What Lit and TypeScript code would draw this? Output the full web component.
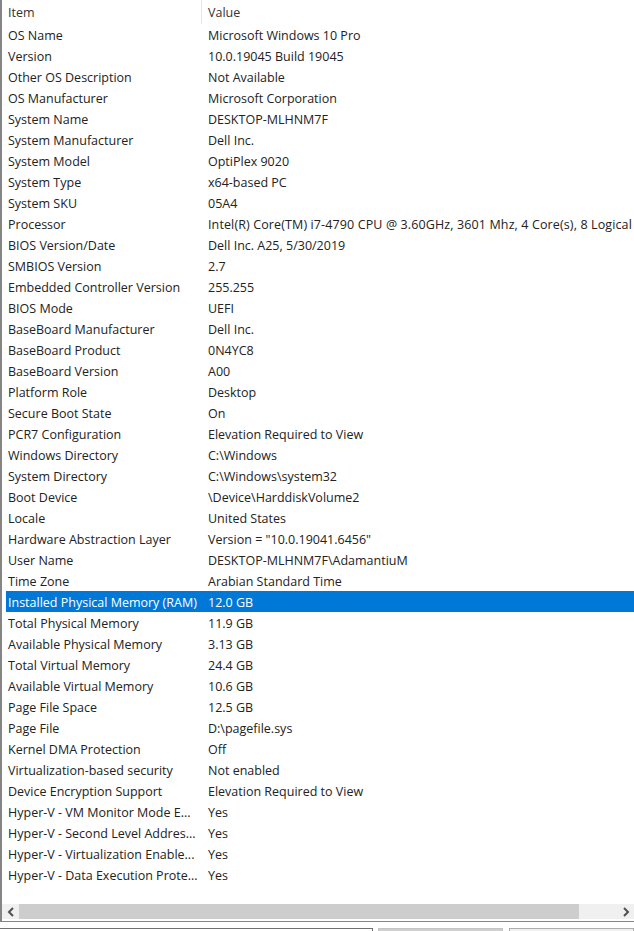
import { LitElement, html, css } from "lit";
import { customElement } from "lit/decorators.js";

const rows: [string, string][] = [
  ["OS Name", "Microsoft Windows 10 Pro"],
  ["Version", "10.0.19045 Build 19045"],
  ["Other OS Description", "Not Available"],
  ["OS Manufacturer", "Microsoft Corporation"],
  ["System Name", "DESKTOP-MLHNM7F"],
  ["System Manufacturer", "Dell Inc."],
  ["System Model", "OptiPlex 9020"],
  ["System Type", "x64-based PC"],
  ["System SKU", "05A4"],
  ["Processor", "Intel(R) Core(TM) i7-4790 CPU @ 3.60GHz, 3601 Mhz, 4 Core(s), 8 Logical"],
  ["BIOS Version/Date", "Dell Inc. A25, 5/30/2019"],
  ["SMBIOS Version", "2.7"],
  ["Embedded Controller Version", "255.255"],
  ["BIOS Mode", "UEFI"],
  ["BaseBoard Manufacturer", "Dell Inc."],
  ["BaseBoard Product", "0N4YC8"],
  ["BaseBoard Version", "A00"],
  ["Platform Role", "Desktop"],
  ["Secure Boot State", "On"],
  ["PCR7 Configuration", "Elevation Required to View"],
  ["Windows Directory", "C:\\Windows"],
  ["System Directory", "C:\\Windows\\system32"],
  ["Boot Device", "\\Device\\HarddiskVolume2"],
  ["Locale", "United States"],
  ["Hardware Abstraction Layer", 'Version = "10.0.19041.6456"'],
  ["User Name", "DESKTOP-MLHNM7F\\AdamantiuM"],
  ["Time Zone", "Arabian Standard Time"],
  ["Installed Physical Memory (RAM)", "12.0 GB"],
  ["Total Physical Memory", "11.9 GB"],
  ["Available Physical Memory", "3.13 GB"],
  ["Total Virtual Memory", "24.4 GB"],
  ["Available Virtual Memory", "10.6 GB"],
  ["Page File Space", "12.5 GB"],
  ["Page File", "D:\\pagefile.sys"],
  ["Kernel DMA Protection", "Off"],
  ["Virtualization-based security", "Not enabled"],
  ["Device Encryption Support", "Elevation Required to View"],
  ["Hyper-V - VM Monitor Mode E...", "Yes"],
  ["Hyper-V - Second Level Addres...", "Yes"],
  ["Hyper-V - Virtualization Enable...", "Yes"],
  ["Hyper-V - Data Execution Prote...", "Yes"],
];

@customElement("app-root")
export class AppRoot extends LitElement {
  static styles = css`
    :host { display: block; width: 634px; height: 931px; overflow: hidden; background: #fff;
      font-family: "Open Sans", "Noto Sans", sans-serif; font-size: 12.5px; color: #222; }
    .panel { height: 922px; box-sizing: border-box; border-left: 2px solid #858585; border-bottom: 1px solid #858585;
      display: flex; flex-direction: column; }
    .list { flex: 1; padding: 0 0 0 4px; overflow: hidden; }
    .head, .row { display: grid; grid-template-columns: 196px 1fr; grid-auto-rows: 21px; white-space: nowrap; }
    .head { height: 24px; grid-auto-rows: 24px; line-height: 25px; color: #333; }
    .head .val { border-left: 1px solid #e5e5e5; padding-left: 6px; margin-left: -1px; }
    .row { height: 21px; line-height: 23px; }
    .row .val { padding-left: 6px; overflow: hidden; }
    .row .val.long { letter-spacing: 0.12px; }
    .row.sel { background: #0078d7; color: #fff; }
    .key { padding-left: 2px; overflow: hidden; }
    .bar { height: 15px; margin: 0 0 2px 0; display: flex; background: #f0f0f0; align-items: stretch; }
    .arrow { width: 17px; display: flex; align-items: center; justify-content: center; flex: none; }
    .arrow svg { width: 8px; height: 10px; }
    .thumb { width: 560px; background: #cdcdcd; flex: none; }
    .track { flex: 1; }
    .footer { display: flex; height: 9px; overflow: hidden; padding-top: 6px; box-sizing: content-box; }
    .btn { box-sizing: border-box; height: 12px; flex: none; border: 1px solid #adadad; }
    .b1 { width: 373px; background: #fff; border-color: #707070; border-left: none; }
    .b2 { width: 125px; margin-left: 5px; background: #cfcfcf; border-color: #c4c4c4; }
    .b3 { width: 125px; margin-left: 6px; background: #f0f0f0; }
  `;

  render() {
    return html`
      <div class="panel">
        <div class="list">
          <div class="head"><div class="key">Item</div><div class="val">Value</div></div>
          <div>
            ${rows.map(
              ([k, v]) => html`<div class="row ${k.startsWith("Installed") ? "sel" : ""}">
                <div class="key">${k}</div><div class="val ${k === "Processor" ? "long" : ""}">${v}</div>
              </div>`
            )}
          </div>
        </div>
        <div class="bar">
          <div class="arrow">
            <svg viewBox="0 0 8 10"><path d="M6 1 L2 5 L6 9" fill="none" stroke="#505050" stroke-width="2"/></svg>
          </div>
          <div class="thumb"></div>
          <div class="track"></div>
          <div class="arrow">
            <svg viewBox="0 0 8 10"><path d="M2 1 L6 5 L2 9" fill="none" stroke="#505050" stroke-width="2"/></svg>
          </div>
        </div>
      </div>
      <div class="footer">
        <div class="btn b1"></div><div class="btn b2"></div><div class="btn b3"></div>
      </div>
    `;
  }
}
